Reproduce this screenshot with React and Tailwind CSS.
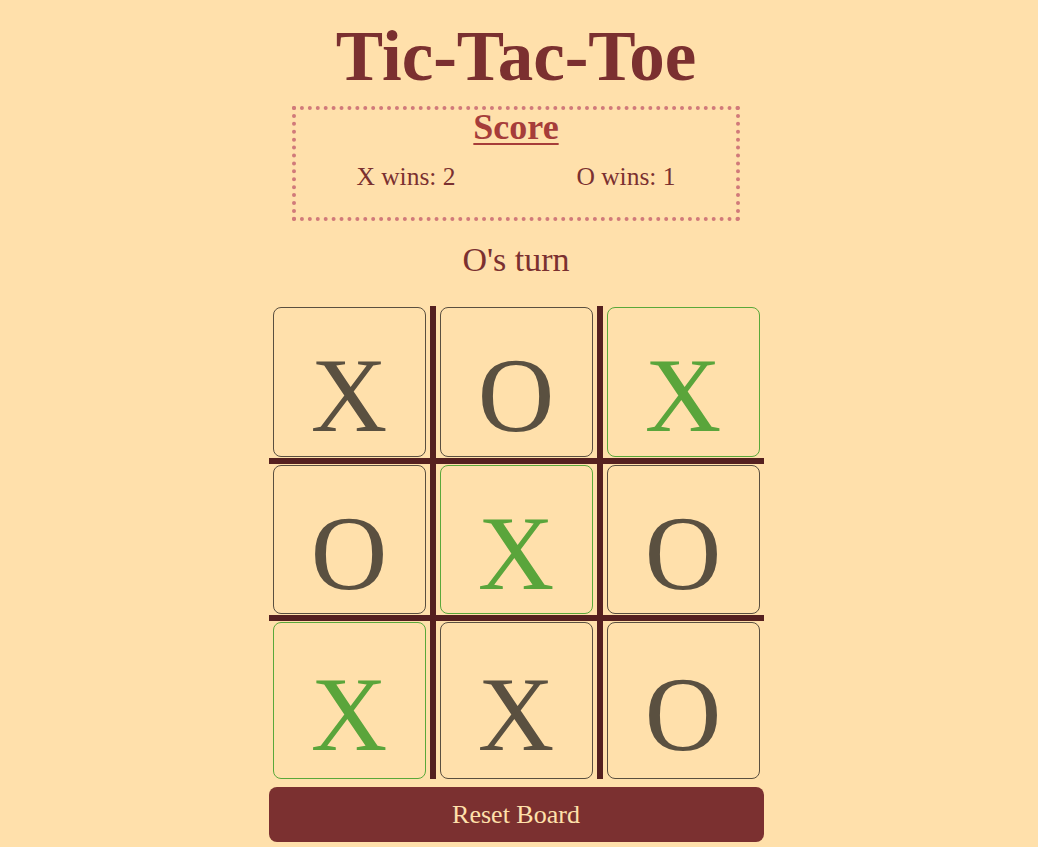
import React, { useState } from 'react';

const serif = { fontFamily: '"Liberation Serif", "Times New Roman", serif' };

const startBoard = ['X', 'O', 'X', 'O', 'X', 'O', 'X', 'X', 'O'];
const winLine = [2, 4, 6];

const App = () => {
  const [board, setBoard] = useState(startBoard);

  return (
    <div className="min-h-screen bg-[#ffe0ab] pr-[6px] pt-[23px] flex flex-col items-center font-['Liberation_Serif',serif]">
      {/* Title */}
      <h1 className="text-[71px] leading-[66px] font-bold text-[#7b3030]">Tic-Tac-Toe</h1>

      {/* Scoreboard */}
      <div className="mt-[17px] w-[448px] border-4 border-dotted border-[#d17a7a] pb-[28px]">
        <h2 className="text-center text-[36px] leading-[34px] font-bold text-[#a63d3a] underline decoration-2 underline-offset-[4px]">
          Score
        </h2>
        <div className="mt-[21px] grid grid-cols-2 text-center text-[25.5px] leading-[24px] text-[#7b3030]">
          <span>X wins: 2</span>
          <span>O wins: 1</span>
        </div>
      </div>

      <p className="mt-[23px] text-[34px] leading-[31px] text-[#7b3030]">O's turn</p>

      {/* Board */}
      <div className="mt-[31px] w-[495px] grid grid-cols-3 grid-rows-[152px_151px_158px] gap-[6px] bg-[#55201f]">
        {board.map((v, i) => {
          const win = winLine.includes(i);
          return (
            <div key={i} className={`bg-[#ffe0ab] px-[4px] pt-[1px] ${i > 5 ? 'pb-0' : 'pb-[1px]'}`}>
              <button
                type="button"
                style={serif}
                onClick={() => setBoard(startBoard)}
                className={`w-full h-full rounded-lg border flex items-center justify-center pt-[28px] text-[106px] leading-none ${
                  win ? 'border-[#5aa83a] text-[#5aa53b]' : 'border-[#5a4f3f] text-[#5a5040]'
                }`}
              >
                {v}
              </button>
            </div>
          );
        })}
      </div>

      <button
        type="button"
        onClick={() => setBoard(startBoard)}
        className="mt-[8px] w-[495px] h-[55px] rounded-lg bg-[#7b3030] text-[#ffe0ab] text-[26px]"
      >
        Reset Board
      </button>
    </div>
  );
};

export default App;
